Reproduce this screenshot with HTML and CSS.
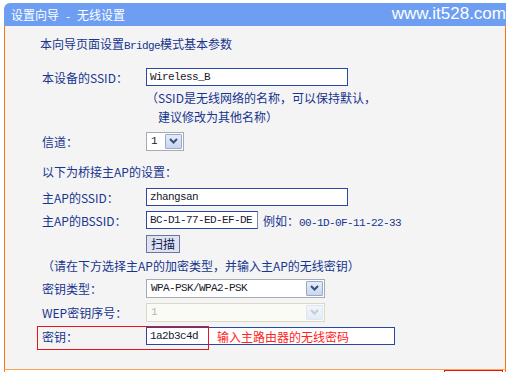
FILE: index.html
```html
<!DOCTYPE html>
<html lang="zh-CN">
<head>
    <meta charset="UTF-8">
    <meta name="viewport" content="width=device-width, initial-scale=1.0">
    <title>设置向导 - 无线设置</title>
    <link rel="stylesheet" href="styles.css">
</head>
<body>
    <div class="wrap">
        <div class="head">
            <span class="head-title">设置向导<span class="gap"> - </span>无线设置</span>
            <span class="site">www.it528.com</span>
        </div>
        <div class="panel">
            <div class="intro">本向导页面设置<span class="mono">Bridge</span>模式基本参数</div>

            <div class="row row-ssid">
                <span class="label">本设备的SSID：</span>
                <div class="field w-long">Wireless_B</div>
            </div>
            <div class="note">（SSID是无线网络的名称，可以保持默认，</div>
            <div class="note note-2">建议修改为其他名称）</div>

            <div class="row row-channel">
                <span class="label">信道：</span>
                <div class="select w-channel">
                    <span class="opt">1</span>
                    <span class="drop">
                        <svg width="9" height="6" viewBox="0 0 9 6"><path d="M1 1 L4.5 4.5 L8 1" fill="none" stroke="#3b4f7a" stroke-width="2"/></svg>
                    </span>
                </div>
            </div>

            <div class="heading">以下为桥接主AP的设置：</div>

            <div class="row row-apssid">
                <span class="label">主AP的SSID：</span>
                <div class="field w-long">zhangsan</div>
            </div>
            <div class="row row-bssid">
                <span class="label">主AP的BSSID：</span>
                <div class="field w-mac">BC-D1-77-ED-EF-DE</div>
                <span class="example">例如：<span class="mono">00-1D-0F-11-22-33</span></span>
            </div>
            <div class="row row-scan">
                <span class="label"></span>
                <button class="btn" type="button">扫描</button>
            </div>

            <div class="heading heading-note">（请在下方选择主AP的加密类型，并输入主AP的无线密钥）</div>

            <div class="row row-type">
                <span class="label">密钥类型：</span>
                <div class="select w-wide">
                    <span class="opt">WPA-PSK/WPA2-PSK</span>
                    <span class="drop">
                        <svg width="9" height="6" viewBox="0 0 9 6"><path d="M1 1 L4.5 4.5 L8 1" fill="none" stroke="#3b4f7a" stroke-width="2"/></svg>
                    </span>
                </div>
            </div>
            <div class="row row-wep">
                <span class="label">WEP密钥序号：</span>
                <div class="select w-wide is-disabled">
                    <span class="opt">1</span>
                    <span class="drop">
                        <svg width="9" height="6" viewBox="0 0 9 6"><path d="M1 1 L4.5 4.5 L8 1" fill="none" stroke="#c4cbd6" stroke-width="2"/></svg>
                    </span>
                </div>
            </div>
            <div class="row row-key">
                <span class="label">密钥：</span>
                <div class="field w-key">
                    <span>1a2b3c4d</span>
                    <span class="hint">输入主路由器的无线密码</span>
                </div>
                <span class="mark"></span>
            </div>
        </div>
        <div class="tail"><span class="tail-mark"></span></div>
    </div>
</body>
</html>
```

FILE: styles.css
```css
body {
    margin: 0;
    background: #fff;
    font-family: "Noto Sans CJK SC", sans-serif;
    font-size: 12px;
    color: #17348f;
    overflow: hidden;
}

.wrap {
    margin: 3px 0 0 4px;
    width: 502px;
}

.head {
    height: 23px;
    background: #6d9ef2;
    border-top-left-radius: 6px;
    display: flex;
    justify-content: space-between;
    align-items: center;
    padding-left: 7px;
    color: #fff;
}
.head-title {
    font-size: 12px;
}
.gap {
    font-family: "Liberation Mono", monospace;
    font-size: 10px;
    white-space: pre;
}
.site {
    font-family: "Liberation Sans", sans-serif;
    font-size: 17px;
    margin-top: -2px;
}

.panel {
    height: 337px;
    padding: 6px 0 0 35px;
    border: 1px solid #ff7410;
    border-top: 0;
    border-bottom-color: #ffa552;
    background: #f4f4f4;
}

.mono {
    font-family: "Liberation Mono", monospace;
    font-size: 11px;
    letter-spacing: -0.6px;
}

.intro {
    height: 24px;
    line-height: 24px;
}

.row {
    display: flex;
    align-items: center;
    height: 22px;
    padding-left: 2px;
}
.label {
    width: 104px;
    flex: none;
}

.row-ssid { margin-top: 10px; }
.row-channel { margin-top: 4px; }
.row-apssid { margin-top: 4px; }
.row-bssid { margin-top: 1px; }
.row-scan { margin-top: 3px; height: 20px; }
.row-type { margin-top: 1px; }
.row-wep { margin-top: 2px; }
.row-key {
    margin-top: 1px;
    height: 24px;
    position: relative;
}

.note {
    height: 20px;
    line-height: 20px;
    padding-left: 106px;
}
.note-2 {
    height: 18px;
    line-height: 18px;
    padding-left: 118px;
}

.heading {
    margin-top: 10px;
    height: 20px;
    line-height: 20px;
    padding-left: 2px;
}
.heading-note { margin-top: 2px; }

.field {
    height: 18px;
    box-sizing: border-box;
    border: 1px solid #2a46a6;
    background: #fff;
    display: flex;
    align-items: center;
    padding-left: 3px;
    font-family: "Liberation Mono", monospace;
    font-size: 11px;
    letter-spacing: -0.6px;
    color: #1a1a2a;
}
.w-long { width: 202px; }
.w-mac { width: 112px; border-right-color: #8088b0; }
.w-key { width: 249px; }

.example {
    margin-left: 5px;
}

.hint {
    margin-left: 19px;
    font-family: "Noto Sans CJK SC", sans-serif;
    font-size: 12px;
    letter-spacing: 0;
    color: #ff2424;
}

.select {
    height: 19px;
    box-sizing: border-box;
    border: 1px solid #a6abb3;
    background: #fff;
    display: flex;
    align-items: stretch;
    color: #1a1a2a;
}
.opt {
    flex: 1;
    display: flex;
    align-items: center;
    padding-left: 4px;
    font-family: "Liberation Mono", monospace;
    font-size: 11px;
    letter-spacing: -0.6px;
}
.drop {
    width: 15px;
    margin: 1px;
    border: 1px solid #98aacb;
    border-radius: 1px;
    background: linear-gradient(#e3ecf9, #c8d7ef);
    display: flex;
    align-items: center;
    justify-content: center;
}
.w-channel { width: 38px; }
.w-wide { width: 179px; }

.is-disabled {
    border-color: #dcd8c8;
    background: #fbfbf6;
    color: #b4b4b4;
}
.is-disabled .drop {
    border-color: #dfe6f1;
    background: linear-gradient(#f1f5fb, #e4ecf7);
}

.btn {
    width: 34px;
    height: 18px;
    padding: 0;
    border: 1px solid #6a76a0;
    background: #dfe3f1;
    color: #101a50;
    font-family: "Noto Sans CJK SC", sans-serif;
    font-size: 12px;
    line-height: 16px;
}

.mark {
    position: absolute;
    left: -3px;
    top: 2px;
    width: 170px;
    height: 22px;
    border: 1px solid #e8141c;
}

.tail {
    height: 2px;
    border-left: 1px solid #ff7410;
    border-right: 1px solid #ff7410;
    position: relative;
}
.tail-mark {
    position: absolute;
    left: 439px;
    top: 0;
    width: 57px;
    height: 2px;
    border: 1px solid #e8141c;
    border-bottom: 0;
}
```
